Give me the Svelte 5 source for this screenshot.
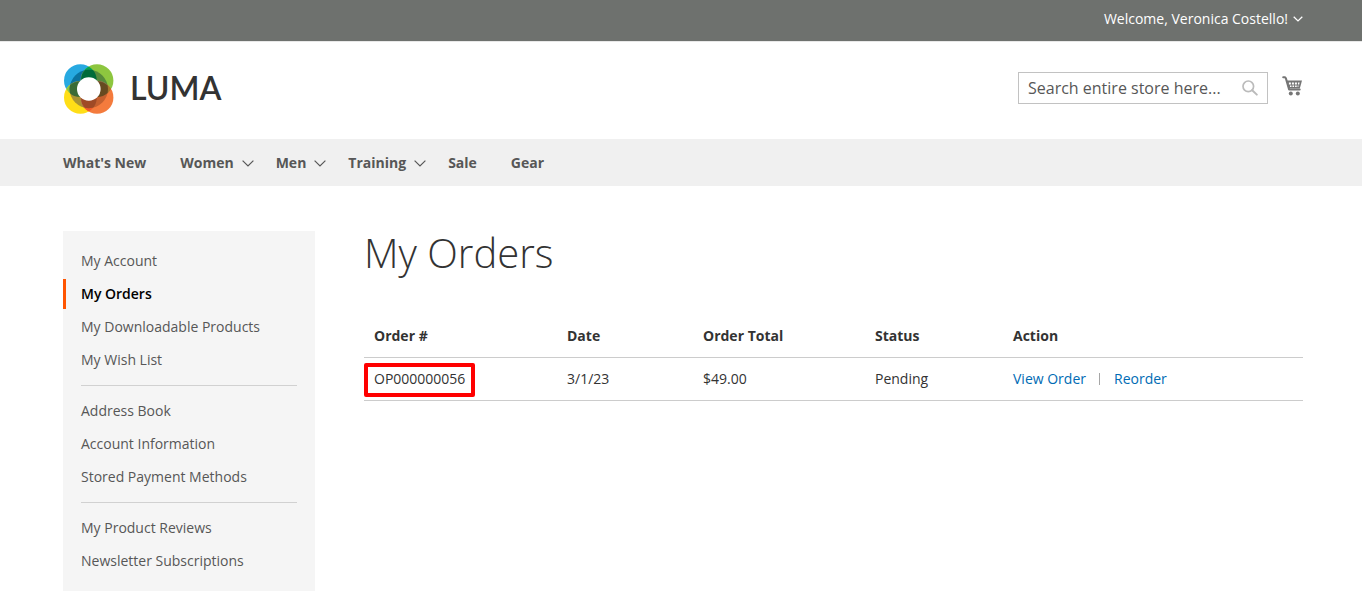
<script>
  const navItems = [
    { label: "What's New", menu: false },
    { label: 'Women', menu: true },
    { label: 'Men', menu: true },
    { label: 'Training', menu: true },
    { label: 'Sale', menu: false },
    { label: 'Gear', menu: false }
  ];

  const accountGroups = [
    ['My Account', 'My Orders', 'My Downloadable Products', 'My Wish List'],
    ['Address Book', 'Account Information', 'Stored Payment Methods'],
    ['My Product Reviews', 'Newsletter Subscriptions']
  ];
  const current = 'My Orders';

  const orders = [{ id: 'OP000000056', date: '3/1/23', total: '$49.00', status: 'Pending' }];
</script>

<header>
  <div class="panel">
    <button class="welcome" type="button">
      Welcome, Veronica Costello!
      <svg width="10" height="6" viewBox="0 0 10 6" aria-hidden="true"><path d="M.7.7 5 4.9 9.3.7" fill="none" stroke="#fff" stroke-width="1.3" /></svg>
    </button>
  </div>
  <div class="masthead">
    <a class="logo" href="#home">
      <svg width="50" height="50" viewBox="0 0 50 50" aria-hidden="true">
        <defs>
          <clipPath id="ring"><circle cx="24.8" cy="25" r="19.2" /></clipPath>
          <clipPath id="blue"><circle cx="16.4" cy="16.6" r="16.4" /></clipPath>
          <clipPath id="green"><circle cx="33" cy="16.6" r="16.4" /></clipPath>
          <clipPath id="yellow"><circle cx="16.4" cy="33.4" r="16.4" /></clipPath>
        </defs>
        <circle cx="16.4" cy="16.6" r="16.4" fill="#27a9e1" />
        <circle cx="33" cy="16.6" r="16.4" fill="#8dc63f" />
        <circle cx="16.4" cy="33.4" r="16.4" fill="#ffde17" />
        <circle cx="33" cy="33.4" r="16.4" fill="#f47b3d" />
        <g clip-path="url(#blue)"><circle cx="33" cy="16.6" r="16.4" fill="#00a551" /><circle cx="16.4" cy="33.4" r="16.4" fill="#8dc63f" /></g>
        <g clip-path="url(#green)"><circle cx="33" cy="33.4" r="16.4" fill="#a87a2e" /></g>
        <g clip-path="url(#yellow)"><circle cx="33" cy="33.4" r="16.4" fill="#f15a29" /></g>
        <g clip-path="url(#ring)" stroke="#fff" stroke-opacity=".2" stroke-width=".5">
          <circle cx="16.4" cy="16.6" r="16.4" fill="#0b729f" />
          <circle cx="33" cy="16.6" r="16.4" fill="#568a3b" />
          <circle cx="16.4" cy="33.4" r="16.4" fill="#a99433" />
          <circle cx="33" cy="33.4" r="16.4" fill="#c4602f" />
          <g clip-path="url(#blue)"><circle cx="33" cy="16.6" r="16.4" fill="#006b3a" /><circle cx="16.4" cy="33.4" r="16.4" fill="#3a6b35" /></g>
          <g clip-path="url(#green)"><circle cx="33" cy="33.4" r="16.4" fill="#664a20" /></g>
          <g clip-path="url(#yellow)"><circle cx="33" cy="33.4" r="16.4" fill="#9f4a26" /></g>
        </g>
        <circle cx="24.8" cy="25" r="11.8" fill="#fff" />
      </svg>
      <span>LUMA</span>
    </a>
    <div class="tools">
      <form class="search" role="search">
        <input type="text" aria-label="Search" placeholder="Search entire store here..." />
        <button type="button" aria-label="Search">
          <svg width="16" height="16" viewBox="0 0 16 16" aria-hidden="true"><circle cx="6.3" cy="6.3" r="5.3" fill="none" stroke="#bbb" stroke-width="1.7" /><path d="m10.2 10.2 4.6 4.4" stroke="#bbb" stroke-width="2" stroke-linecap="round" /></svg>
        </button>
      </form>
      <a class="cart" href="#cart" aria-label="My Cart">
        <svg width="20" height="20" viewBox="0 0 20 20" aria-hidden="true">
          <path d="M1.2 1.2h1.9l.8 1.2 3.2 11.1h10.6" fill="none" stroke="#757575" stroke-width="2" stroke-linecap="round" stroke-linejoin="round" />
          <path d="M4.2 4.4H20l-2.2 8H6.6z" fill="#757575" />
          <path d="M6.9 6.6h2v1.8h-2zm3 0h2v1.8h-2zm3 0h2v1.8h-2zm3 0h1.7l-.4 1.8H16zM8 9.4h1.5v1.6H8zm2.5 0h1.6v1.6h-1.6zm2.6 0h1.6v1.6h-1.6zm2.5 0h1l-.3 1.6h-.7z" fill="#fff" />
          <circle cx="8.8" cy="17.4" r="2" fill="#757575" /><circle cx="15.8" cy="17.4" r="2" fill="#757575" />
        </svg>
      </a>
    </div>
  </div>
  <nav class="main-nav" aria-label="Store">
    {#each navItems as item}
      <a href="#store" class:menu={item.menu}>
        {item.label}
        {#if item.menu}
          <svg width="12" height="7" viewBox="0 0 12 7" aria-hidden="true"><path d="M.6.6 6 5.9 11.4.6" fill="none" stroke="#575757" stroke-width="1.2" /></svg>
        {/if}
      </a>
    {/each}
  </nav>
</header>

<div class="columns">
  <nav class="sidebar" aria-label="Account">
    {#each accountGroups as group}
      <ul>
        {#each group as label}
          <li><a href="#account" class:current={label === current} aria-current={label === current ? 'page' : undefined}>{label}</a></li>
        {/each}
      </ul>
    {/each}
  </nav>

  <main>
    <h1>My Orders</h1>
    <table>
      <thead>
        <tr>
          <th class="id" scope="col">Order #</th>
          <th class="date" scope="col">Date</th>
          <th class="total" scope="col">Order Total</th>
          <th class="status" scope="col">Status</th>
          <th scope="col">Action</th>
        </tr>
      </thead>
      <tbody>
        {#each orders as order}
          <tr>
            <td><span class="marked">{order.id}</span></td>
            <td>{order.date}</td>
            <td>{order.total}</td>
            <td>{order.status}</td>
            <td><div class="actions"><a href="#view">View Order</a><a href="#reorder">Reorder</a></div></td>
          </tr>
        {/each}
      </tbody>
    </table>
  </main>
</div>

<style>
  :global(body) {
    margin: 0;
    background: #fff;
    color: #333;
    font: 400 14px/20px 'Open Sans', sans-serif;
  }

  a {
    color: inherit;
    text-decoration: none;
  }

  button {
    padding: 0;
    border: 0;
    background: none;
    color: inherit;
    font: inherit;
    cursor: pointer;
  }

  svg {
    display: block;
  }

  .panel,
  .masthead,
  .main-nav,
  .columns {
    box-sizing: border-box;
    padding-right: 59px;
    padding-left: 63px;
  }

  .panel {
    display: flex;
    justify-content: flex-end;
    padding-top: 9px;
    padding-bottom: 12px;
    background: #6e716e;
    color: #fff;
  }

  .welcome {
    display: flex;
    align-items: center;
    gap: 5px;
  }

  .masthead {
    display: flex;
    align-items: center;
    justify-content: space-between;
    padding-top: 22px;
    padding-bottom: 25px;
    border-top: 1px solid #e8e8e8;
  }

  .logo {
    display: flex;
    align-items: center;
    gap: 16px;
    padding-left: 1px;
    font: 600 32px/48px Lato, sans-serif;
  }

  .logo span {
    padding-bottom: 2px;
  }

  .tools {
    display: flex;
    align-items: center;
    gap: 14px;
    padding-bottom: 2px;
  }

  .search {
    display: flex;
    box-sizing: border-box;
    width: 250px;
    height: 32px;
    border: 1px solid #c2c2c2;
  }

  .search input {
    flex: 1;
    min-width: 0;
    padding: 0 0 0 9px;
    border: 0;
    outline: 0;
    background: none;
    color: #333;
    font: 400 16px/22px 'Open Sans', sans-serif;
  }

  .search input::placeholder {
    color: #575757;
    opacity: 1;
  }

  .search button {
    padding: 0 9px;
  }

  .cart {
    padding: 0 1px 4px 0;
  }

  .main-nav {
    display: flex;
    gap: 34px;
    padding-top: 14px;
    padding-bottom: 13px;
    background: #f0f0f0;
    color: #575757;
    font-weight: 700;
  }

  .main-nav a {
    display: flex;
    align-items: center;
    gap: 8px;
  }

  .main-nav .menu {
    margin-right: -12px;
  }

  .columns {
    display: grid;
    grid-template-columns: 252px 1fr;
    align-items: start;
    gap: 49px;
    padding-top: 45px;
  }

  .sidebar {
    padding: 15px 0 12px;
    background: #f5f5f5;
    color: #575757;
  }

  ul {
    margin: 0;
    padding: 0;
    list-style: none;
  }

  ul + ul::before {
    display: block;
    height: 1px;
    margin: 7px 18px 10px;
    background: #d1d1d1;
    content: '';
  }

  li {
    padding-bottom: 3px;
  }

  li a {
    display: block;
    padding: 5px 15px;
    border-left: 3px solid transparent;
  }

  .current {
    border-color: #ff5501;
    color: #000;
    font-weight: 600;
  }

  h1 {
    margin: 0 0 40px;
    font-size: 40px;
    font-weight: 300;
    line-height: 44px;
  }

  table {
    width: 100%;
    border-collapse: separate;
    border-spacing: 0;
    table-layout: fixed;
  }

  th,
  td {
    padding: 11px 10px;
    border-bottom: 1px solid #ccc;
    text-align: left;
  }

  .id {
    width: 173px;
  }

  .date {
    width: 116px;
  }

  .total {
    width: 152px;
  }

  .status {
    width: 118px;
  }

  .marked {
    position: relative;
  }

  .marked::after {
    position: absolute;
    inset: -6px -10px -9px -10px;
    border: 4px solid #f00;
    border-radius: 2px;
    content: '';
  }

  .actions {
    display: flex;
    align-items: center;
    color: #006bb4;
  }

  .actions a + a::before {
    display: inline-block;
    width: 1px;
    height: 12px;
    margin: 0 14px 0 13px;
    background: #a6a6a6;
    vertical-align: -1px;
    content: '';
  }
</style>
